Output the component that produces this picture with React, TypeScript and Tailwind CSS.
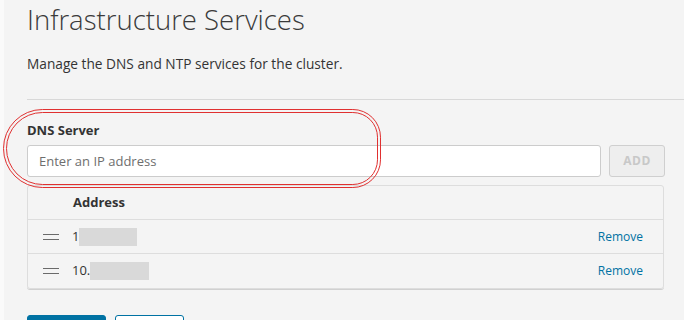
import { useState } from 'react';

type Server = { id: number; prefix: string; maskWidth: number };

const servers: Server[] = [
  { id: 1, prefix: '1', maskWidth: 58 },
  { id: 2, prefix: '10.', maskWidth: 59 },
];

function DragHandle() {
  return (
    <svg width="16" height="8" viewBox="0 0 16 8" className="text-[#6a6a6a]">
      <line x1="0" y1="1.5" x2="16" y2="1.5" stroke="currentColor" strokeWidth="1" />
      <line x1="0" y1="6.5" x2="16" y2="6.5" stroke="currentColor" strokeWidth="1" />
    </svg>
  );
}

export default function App() {
  const [value, setValue] = useState('');

  return (
    <div className="relative w-[684px] h-[320px] overflow-hidden bg-[#fafafa] pl-[4px] font-['Open_Sans','Liberation_Sans',sans-serif] text-[#333]">
      <div className="h-full bg-[#f4f4f4] pl-[23px] pt-[3px]">
        <h1 className="text-[27.5px] font-light leading-[34px] text-[#3a3a3a]">Infrastructure Services</h1>
        <p className="mt-[19px] text-[13.7px] leading-[16px] text-[#333]">
          Manage the DNS and NTP services for the cluster.
        </p>
        <div className="mt-[27px] h-px bg-[#d8d8d8]" />

        <div className="w-[638px]">
          <label className="mt-[22px] block text-[13px] font-bold leading-[16px] text-[#333]">DNS Server</label>
          <div className="mt-[7px] flex gap-[8px]">
            <input
              value={value}
              onChange={(e) => setValue(e.target.value)}
              placeholder="Enter an IP address"
              className="h-[32px] flex-1 rounded-[3px] border border-[#cccccc] bg-white px-[11px] text-[13px] text-[#333] placeholder:text-[#6e6e6e] outline-none"
            />
            <button
              disabled
              className="h-[32px] w-[56px] rounded-[3px] border border-[#cfcfcf] bg-[#eeeeee] text-[12px] font-bold tracking-[0.5px] text-[#c8c8c8]"
            >
              ADD
            </button>
          </div>

          <div className="mt-[8px] mr-[1px] rounded-[3px] border border-[#dddddd] shadow-[0_1px_0_#d0d0d0]">
            <div className="flex h-[34px] items-center border-b border-[#dddddd] pl-[45px] text-[13px] font-bold text-[#333]">
              Address
            </div>
            {servers.map((s, i) => (
              <div
                key={s.id}
                className={
                  'flex h-[34px] items-center pl-[15px] pr-[20px] text-[13px] ' +
                  (i < servers.length - 1 ? 'border-b border-[#dddddd]' : '')
                }
              >
                <DragHandle />
                <span className="ml-[13px] text-[#333]">{s.prefix}</span>
                <span className="h-[18px] bg-[#d9d9d9]" style={{ width: s.maskWidth }} />
                <a className="ml-auto text-[12px] text-[#0072a3]">Remove</a>
              </div>
            ))}
          </div>

          <div className="mt-[26px] flex gap-[9px]">
            <button className="h-[36px] w-[79px] rounded-[3px] border border-[#0072a3] bg-[#0072a3]" />
            <button className="h-[36px] w-[69px] rounded-[3px] border border-[#0072a3] bg-white" />
          </div>
        </div>
      </div>

      <div className="pointer-events-none absolute left-[3px] top-[109px] h-[79px] w-[378px] rounded-l-[42px] rounded-r-[30px] border-[4px] border-double border-[#e03030]" />
    </div>
  );
}
